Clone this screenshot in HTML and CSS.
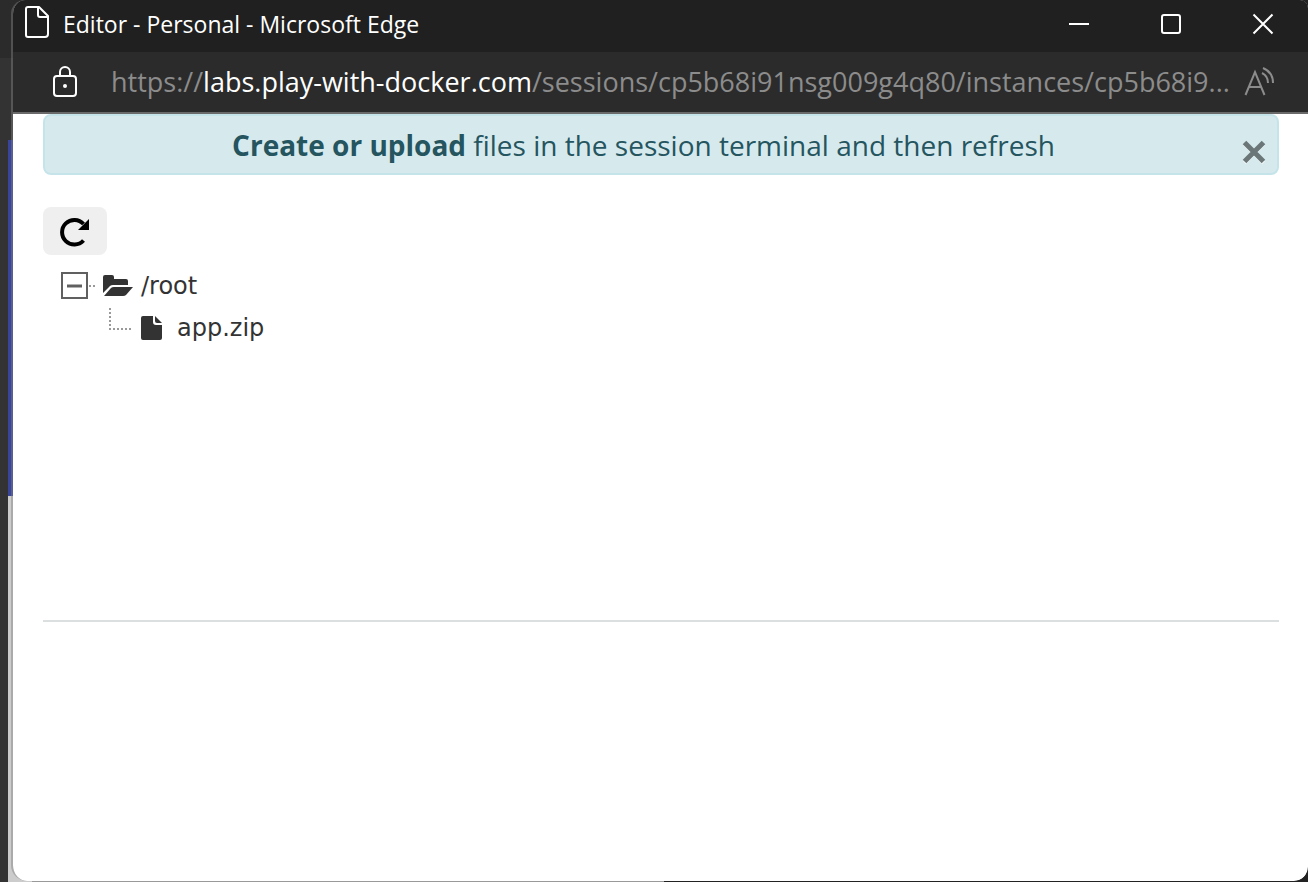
FILE: index.html
```html
<!DOCTYPE html>
<html lang="en">
<head>
<meta charset="utf-8">
<title>Editor</title>
<link rel="stylesheet" href="styles.css">
</head>
<body>
<div class="window">
  <header class="titlebar">
    <svg class="page-icon" width="26" height="34" viewBox="0 0 26 34" fill="none" stroke="#fff" stroke-width="2" stroke-linejoin="round"><path d="M4 2h11l9 9v18a3 3 0 0 1-3 3H4a2 2 0 0 1-2-2V4a2 2 0 0 1 2-2zM14 2v8a2 2 0 0 0 2 2h8"/></svg>
    <span class="title">Editor - Personal - Microsoft Edge</span>
    <div class="controls">
      <button class="control" aria-label="Minimize"><svg width="22" height="22" viewBox="0 0 22 22"><path d="M1 11h20" stroke="#fff" stroke-width="2"/></svg></button>
      <button class="control" aria-label="Maximize"><svg width="22" height="22" viewBox="0 0 22 22"><rect x="2" y="2" width="18" height="18" rx="2" fill="none" stroke="#fff" stroke-width="2"/></svg></button>
      <button class="control" aria-label="Close"><svg width="22" height="22" viewBox="0 0 22 22"><path d="M1.500 1.500l19 19M20.500 1.500l-19 19" stroke="#fff" stroke-width="2"/></svg></button>
    </div>
  </header>
  <div class="addressbar">
    <button class="bar-button lock" aria-label="Site information"><svg width="26" height="32" viewBox="0 0 26 32" fill="none" stroke="#fff" stroke-width="2"><rect x="2" y="10" width="22" height="20" rx="3"/><path d="M8 10V6a5 5 0 0 1 10 0v4"/><circle cx="13" cy="20" r="2" fill="#fff" stroke="none"/></svg></button>
    <div class="url">https://<span class="host">labs.play-with-docker.com</span>/sessions/cp5b68i91nsg009g4q80/instances/cp5b68i9...</div>
    <button class="bar-button read" aria-label="Read aloud"><svg width="32" height="30" viewBox="0 0 32 30" fill="none" stroke="#8c8c8c" stroke-width="2"><path d="M1.500 28L11 5l9.500 23M5 20h13M18 6c4 2 6 6 6 10M19 1c7 3 10 8 10 15"/></svg></button>
  </div>
  <main class="content">
    <div class="alert" role="alert">
      <p class="message"><strong>Create or upload</strong> files in the session terminal and then refresh</p>
      <button class="dismiss" aria-label="Dismiss"><svg width="24" height="24" viewBox="0 0 24 24"><path d="M2.500 3.500l19 19M21.500 3.500l-19 19" stroke="#fff" stroke-width="4"/><path d="M2.500 2.500l19 19M21.500 2.500l-19 19" stroke="#6b7678" stroke-width="5"/></svg></button>
    </div>
    <button class="refresh" aria-label="Refresh"><svg width="32" height="32" viewBox="0 0 32 32"><path d="M24.500 25.500A12.300 12.300 0 1 1 24.500 9" fill="none" stroke="#000" stroke-width="4"/><path d="M30 4v11H19z"/></svg></button>
    <ul class="tree">
      <li>
        <div class="node">
          <button class="toggle" aria-label="Collapse"><svg width="36" height="28" viewBox="0 0 36 28" fill="none" stroke="#606060"><rect x="3" y="1" width="25" height="25" stroke-width="2"/><path d="M8 14h15" stroke-width="3"/><path d="M30 14h6" stroke="#999" stroke-width="2" stroke-dasharray="2 2"/></svg></button>
          <svg class="folder" width="32" height="26" viewBox="0 0 32 26" fill="#333"><path d="M1 20V4q0-2 2-2h7q2 0 2 2v2h12q2 0 2 2v4H11q-2 0-3 1z"/><path d="M2 23l7-8q1-1 3-1h19l-7 8q-1 1-3 1z"/></svg>
          <span class="label">/root</span>
        </div>
        <ul class="branch">
          <li class="node leaf">
            <svg class="line" width="23" height="24" viewBox="0 0 23 24" fill="none" stroke="#999" stroke-width="2" stroke-dasharray="2 2"><path d="M2 0v21h21"/></svg>
            <svg class="file" width="22" height="26" viewBox="0 0 22 26" fill="#333"><path d="M2 1h10v6q0 3 3 3h6v13q0 2-2 2H2q-2 0-2-2V3q0-2 2-2z"/><path d="M14 1l7 7h-5q-2 0-2-2z"/></svg>
            <span class="label">app.zip</span>
          </li>
        </ul>
      </li>
    </ul>
    <hr class="rule">
  </main>
</div>
</body>
</html>
```
FILE: styles.css
```css
* { box-sizing: border-box; }

body {
  margin: 0;
  min-height: 100vh;
  display: flex;
  padding-left: 11px;
  font-family: "Open Sans", "Noto Sans", sans-serif;
  background:
    linear-gradient(#2b2b2b, #2b2b2b) 0 0 / 24px 58px no-repeat,
    linear-gradient(#333 0 82px, #38459b 82px 438px, #ccc 438px) 8px 58px / 24px 100% no-repeat,
    linear-gradient(90deg, #333 0 8px, #999 8px 664px, #222 664px) no-repeat;
}

button {
  padding: 0;
  border: 0;
  background: none;
  display: flex;
  align-items: center;
  justify-content: center;
}

svg { display: block; flex: none; }

ul { list-style: none; margin: 0; padding: 0; }

.window {
  flex: 1;
  min-width: 0;
  display: flex;
  flex-direction: column;
  margin-bottom: 1px;
  border-left: 2px solid rgba(128, 128, 128, 0.45);
  border-radius: 14px 8px 14px 16px;
  background: #fff;
  background-clip: padding-box;
  overflow: hidden;
}

.titlebar {
  display: flex;
  align-items: center;
  height: 52px;
  padding-left: 11px;
  background: #202020;
  color: #fff;
}

.page-icon { margin-bottom: 8px; }

.title {
  flex: 1;
  margin-left: 13px;
  padding-bottom: 5px;
  font-size: 23px;
  white-space: nowrap;
}

.controls { display: flex; margin-right: -1px; padding-bottom: 4px; }

.control { width: 92px; height: 48px; }

.addressbar {
  display: flex;
  align-items: center;
  height: 62px;
  padding: 0 32px 0 39px;
  border-bottom: 2px solid #6a6a6a;
  background: #2b2b2b;
}

.url {
  flex: 1;
  min-width: 0;
  margin-left: 33px;
  overflow: hidden;
  color: #8c8c8c;
  font-size: 27px;
  line-height: 40px;
  white-space: nowrap;
}

.host { color: #fff; }

.content { padding: 0 29px 0 30px; }

.alert {
  display: flex;
  align-items: center;
  height: 61px;
  padding-right: 11px;
  border: 2px solid #c5e4e9;
  border-radius: 8px;
  background: #d6eaee;
  color: #25555f;
}

.message {
  flex: 1;
  margin: 0;
  font-size: 28px;
  line-height: 42px;
  text-align: center;
}

.dismiss { padding-top: 14px; }

.refresh {
  width: 64px;
  height: 48px;
  margin-top: 32px;
  border-radius: 8px;
  background: #efefef;
}

.tree {
  min-height: 365px;
  padding: 10px 0 0 16px;
  color: #333;
  font-family: "DejaVu Sans", sans-serif;
  font-size: 24px;
}

.node { display: flex; align-items: center; height: 42px; }

.folder { margin-left: 7px; }

.toggle + .folder + .label { margin-left: 7px; }

.branch { padding-left: 49px; }

.line { margin-bottom: 17px; }

.file { margin-left: 10px; }

.leaf .label { margin-left: 14px; }

.rule { margin: 0; border: 0; border-top: 2px solid #dcdfdf; }
```
